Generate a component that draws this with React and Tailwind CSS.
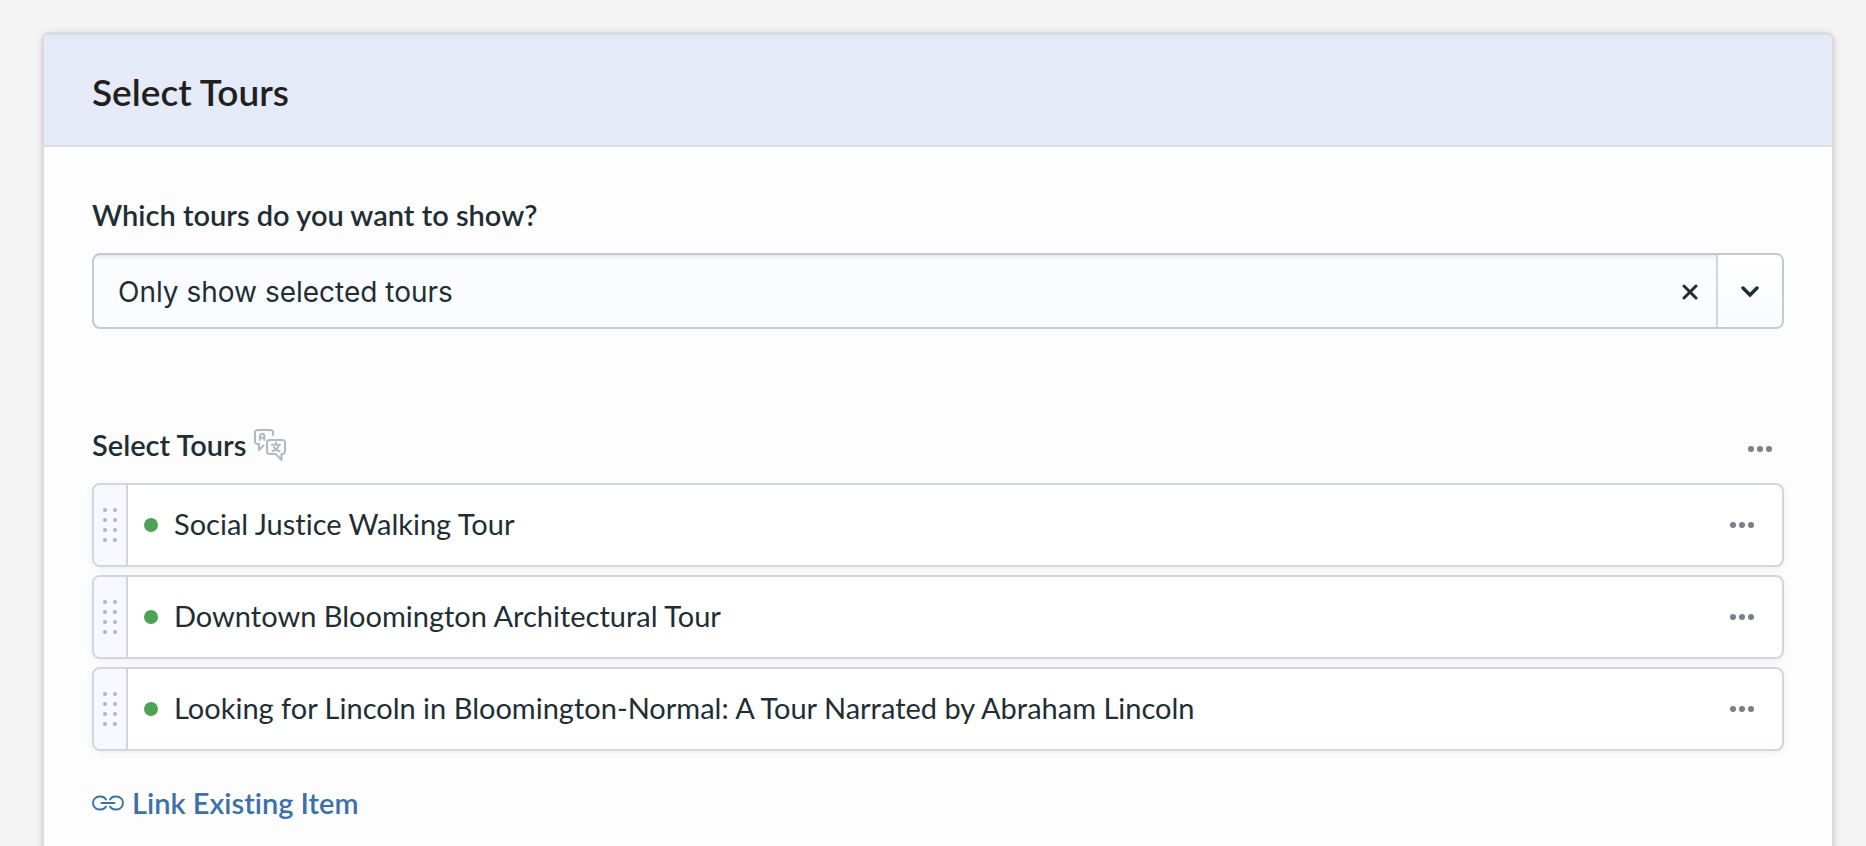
import { useState } from "react";

const tours = [
  "Social Justice Walking Tour",
  "Downtown Bloomington Architectural Tour",
  "Looking for Lincoln in Bloomington-Normal: A Tour Narrated by Abraham Lincoln",
];

const DotsIcon = () => (
  <svg width="24" height="6" viewBox="0 0 24 6" fill="currentColor" aria-hidden="true">
    <circle cx="3" cy="3" r="3" />
    <circle cx="12" cy="3" r="3" />
    <circle cx="21" cy="3" r="3" />
  </svg>
);

const GripIcon = () => (
  <svg width="14" height="34" viewBox="0 0 14 34" fill="currentColor" aria-hidden="true">
    {[2, 12, 22, 32].map((y) => (
      <g key={y}>
        <circle cx="2" cy={y} r="2" />
        <circle cx="12" cy={y} r="2" />
      </g>
    ))}
  </svg>
);

const TranslateIcon = () => (
  <svg
    width="32"
    height="32"
    viewBox="0 0 32 32"
    fill="none"
    stroke="currentColor"
    strokeWidth="2"
    strokeLinecap="round"
    strokeLinejoin="round"
    aria-hidden="true"
  >
    <path d="M19 6V3.500a2.500 2.500 0 0 0-2.500-2.500h-13A2.500 2.500 0 0 0 1 3.500v9A2.500 2.500 0 0 0 3.500 15H5v6l4.500-4.500" />
    <path d="M6 11V7a2.200 2.200 0 0 1 4.400 0v4M6 8.700h4.400" />
    <path d="M15.500 11h13A2.500 2.500 0 0 1 31 13.500v9a2.500 2.500 0 0 1-2.500 2.500H27.500v6l-6-6h-6a2.500 2.500 0 0 1-2.500-2.500v-9a2.500 2.500 0 0 1 2.500-2.500z" />
    <path d="M22 13.500v2M18 15.800h8M24.800 16c-.8 3.200-3 5.200-6.300 6.200M19.800 18.300c1.200 2 3 3.300 5.700 3.900" />
  </svg>
);

const LinkIcon = () => (
  <svg
    width="32"
    height="16"
    viewBox="0 0 32 16"
    fill="none"
    stroke="currentColor"
    strokeWidth="1.900"
    strokeLinecap="round"
    aria-hidden="true"
  >
    <path d="M14 4.500A6 6 0 0 0 9 1.500H7.500a6.500 6.500 0 0 0 0 13H9a6 6 0 0 0 5-3" />
    <path d="M18 4.500A6 6 0 0 1 23 1.500h1.500a6.500 6.500 0 0 1 0 13H23a6 6 0 0 1-5-3" />
    <path d="M9.500 8h13" />
  </svg>
);

const TourRow = ({ title }) => (
  <li className="flex h-[84px] overflow-hidden rounded-lg border-2 border-[#d1d5dc] bg-white shadow-[0_2px_8px_rgba(0,0,0,0.06)]">
    <button
      aria-label={`Reorder ${title}`}
      className="flex w-[34px] shrink-0 items-center justify-center border-r-2 border-[#d1d5dc] bg-[#f6f8fd] text-[#b3b5b8]"
    >
      <GripIcon />
    </button>
    <div className="flex grow items-center pl-4 pr-7">
      <span className="h-[14px] w-[14px] shrink-0 rounded-full bg-[#4ea253]" />
      <span className="ml-4 grow pb-0.5">{title}</span>
      <button aria-label={`Options for ${title}`} className="text-[#74808a]">
        <DotsIcon />
      </button>
    </div>
  </li>
);

export default function App() {
  const [mode, setMode] = useState("selected");

  return (
    <div className="h-screen overflow-hidden bg-[#f4f4f4] pl-11 pr-[34px] pt-[35px] font-['Lato',sans-serif] text-[29px] leading-10 text-[#1f2e35] [font-variant-ligatures:none]">
      <section className="rounded-md bg-[#fdfdfd] shadow-[0_0_0_3px_#dcdce0,0_0_6px_3px_rgba(0,0,0,0.1)]">
        <header className="rounded-t-sm border-b-2 border-[#dbdfe9] bg-[#e4eaf8] px-12 pt-[34px] pb-[30px]">
          <h1 className="text-[37px] leading-[46px] font-semibold text-[#231f20]">Select Tours</h1>
        </header>

        <div className="px-12 pt-12 pb-16">
          <label htmlFor="tour-mode" className="block font-semibold">
            Which tours do you want to show?
          </label>
          <div className="mt-[18px] flex h-[76px] overflow-hidden rounded-lg border-2 border-[#c4cad3] bg-[#fbfcff]">
            <div className="flex grow items-center pl-6 pr-[18px] pt-0.5 shadow-[inset_0_4px_4px_-3px_rgba(30,50,80,0.15)]">
              <select
                id="tour-mode"
                value={mode}
                onChange={(e) => setMode(e.target.value)}
                className="grow appearance-none bg-transparent font-['Inter',sans-serif] text-[28px] outline-none"
              >
                <option value="" />
                <option value="selected">Only show selected tours</option>
                <option value="all">Show all tours</option>
              </select>
              <button aria-label="Clear" onClick={() => setMode("")}>
                <svg width="16" height="16" viewBox="0 0 16 16" fill="none" stroke="currentColor" strokeWidth="3" strokeLinecap="round">
                  <path d="M2 2l12 12M14 2L2 14" />
                </svg>
              </button>
            </div>
            <button
              aria-label="Show options"
              className="flex w-[66px] shrink-0 items-center justify-center border-l-2 border-[#d1d5dc] bg-linear-to-b from-white to-[#fafbff] pt-0.5"
            >
              <svg width="18" height="12" viewBox="0 0 18 12" fill="none" stroke="currentColor" strokeWidth="3.500" strokeLinecap="round">
                <path d="M2 2l7 7 7-7" />
              </svg>
            </button>
          </div>

          <div className="mt-24 flex items-center pr-3">
            <h2 className="font-semibold">Select Tours</h2>
            <span className="ml-2 text-[#b0bac4]">
              <TranslateIcon />
            </span>
            <button aria-label="Field options" className="ml-auto pt-2 text-[#74808a]">
              <DotsIcon />
            </button>
          </div>

          <ul className="mt-[18px] flex flex-col gap-2">
            {tours.map((title) => (
              <TourRow key={title} title={title} />
            ))}
          </ul>

          <a href="#link" className="mt-8 flex items-center gap-2 font-semibold text-[#3e70a8]">
            <LinkIcon />
            Link Existing Item
          </a>
        </div>
      </section>
    </div>
  );
}
